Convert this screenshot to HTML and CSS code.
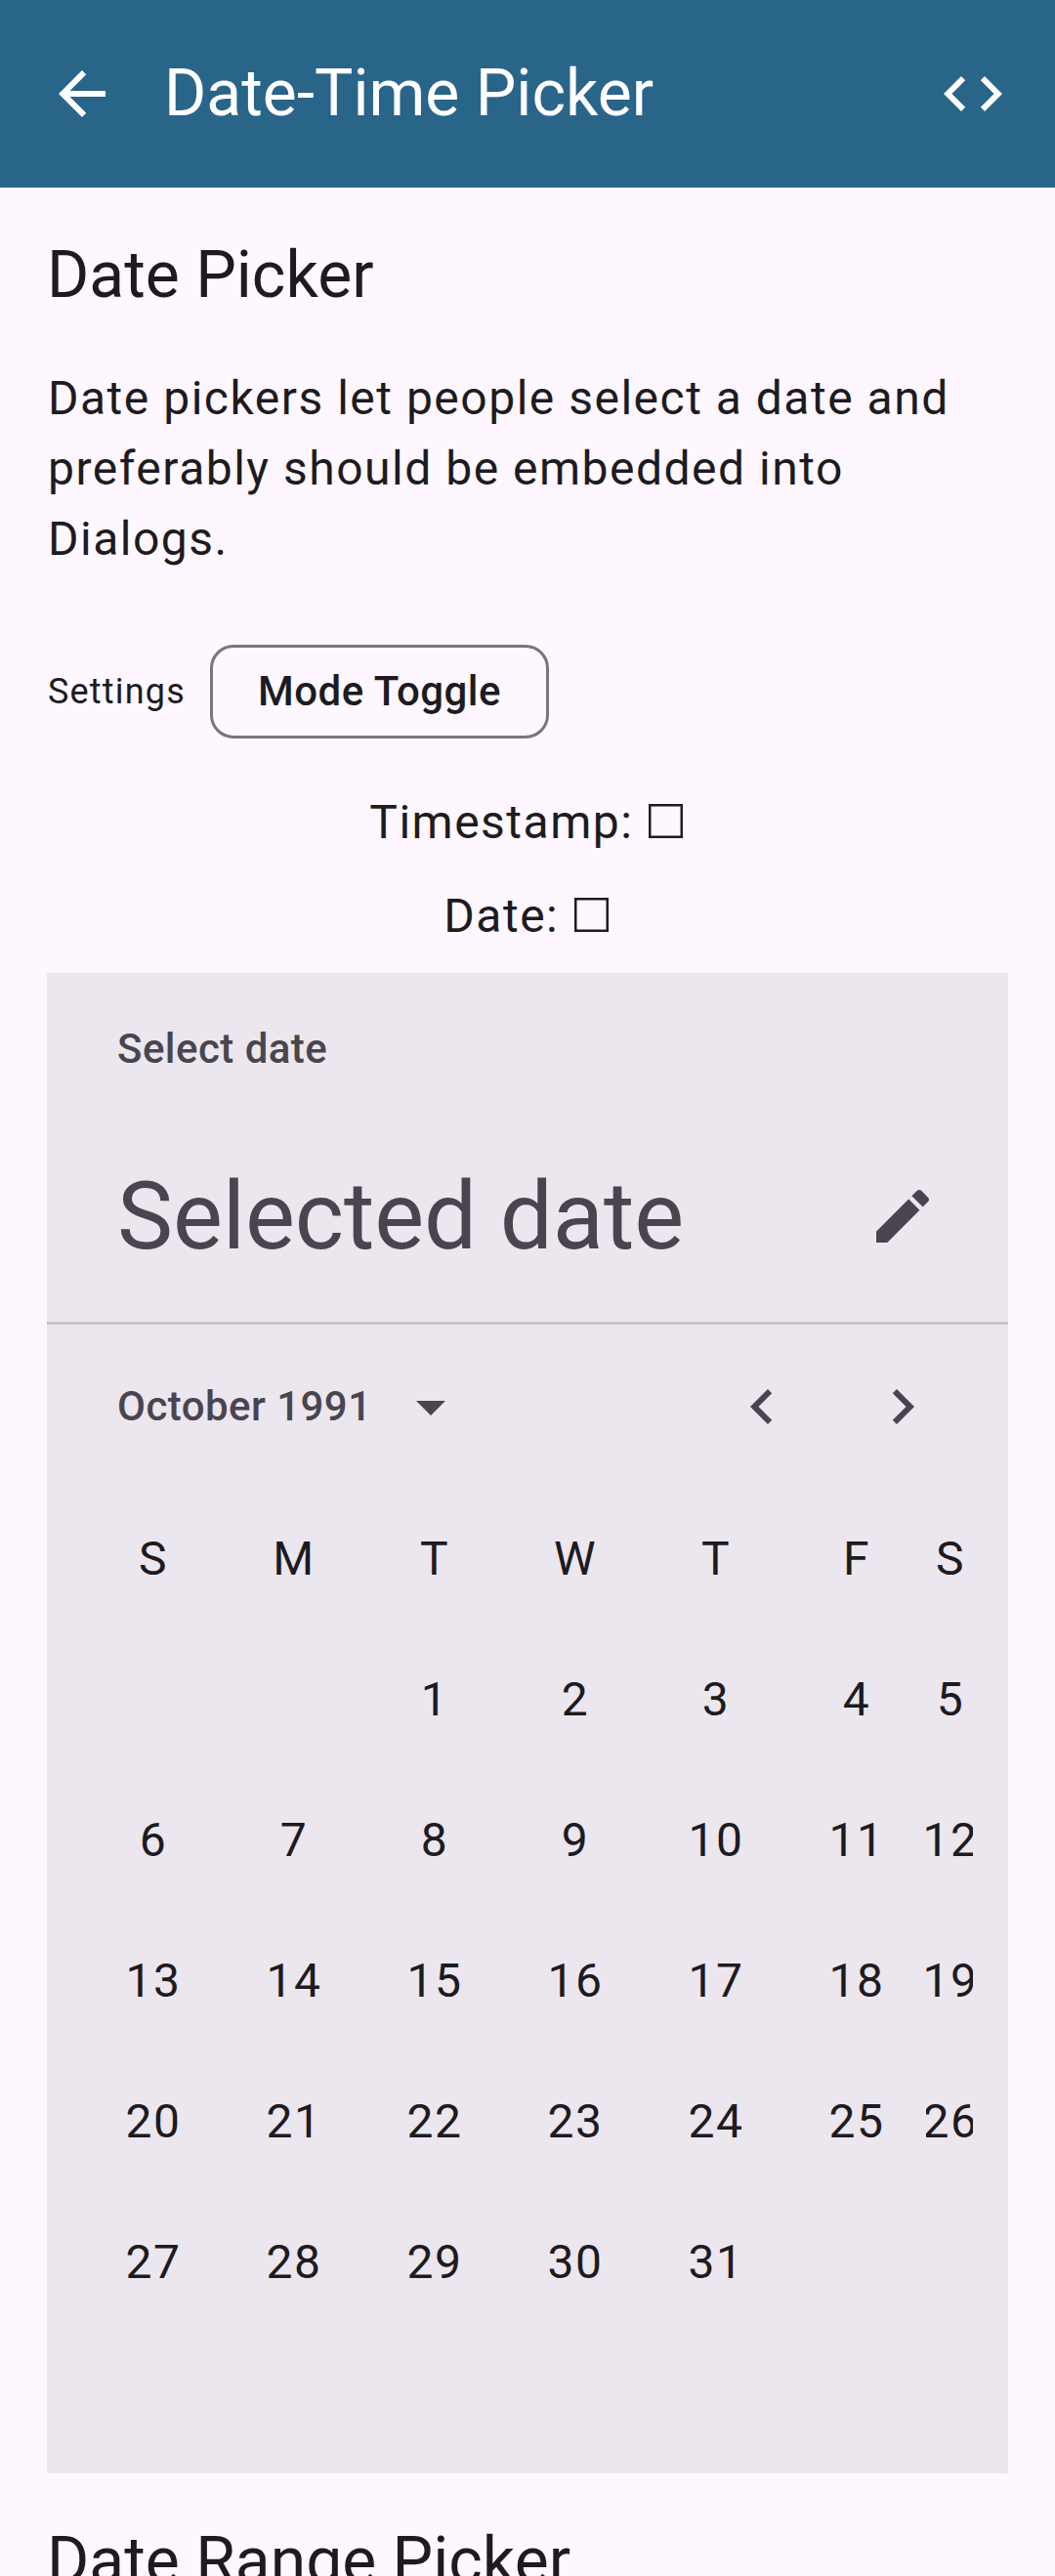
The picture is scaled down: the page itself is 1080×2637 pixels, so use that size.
FILE: index.html
```html
<!DOCTYPE html>
<html lang="en">
<head>
<meta charset="utf-8">
<title>Date-Time Picker</title>
<link rel="stylesheet" href="styles.css">
</head>
<body>
<header class="app-bar">
  <svg class="icon" viewBox="0 0 24 24"><path d="M20 11H7.83l5.59-5.59L12 4l-8 8 8 8 1.41-1.41L7.83 13H20v-2z"/></svg>
  <h1 class="app-title">Date-Time Picker</h1>
  <svg class="icon" viewBox="0 0 24 24"><path d="M9.4 16.6 4.8 12l4.6-4.6L8 6l-6 6 6 6 1.4-1.4zm5.2 0 4.6-4.6-4.6-4.6L16 6l6 6-6 6-1.4-1.4z"/></svg>
</header>
<main class="content">
  <h2 class="section-title">Date Picker</h2>
  <p class="description">Date pickers let people select a date and preferably should be embedded into Dialogs.</p>
  <div class="settings">
    <span class="settings-label">Settings</span>
    <button class="chip">Mode Toggle</button>
  </div>
  <div class="values">
    <p class="value">Timestamp: <svg class="empty-box" viewBox="0 0 35 35"><rect x="1.25" y="1.25" width="32.5" height="32.5"/></svg></p>
    <p class="value">Date: <svg class="empty-box" viewBox="0 0 35 35"><rect x="1.25" y="1.25" width="32.5" height="32.5"/></svg></p>
  </div>
  <section class="picker">
    <div class="picker-header">
      <div class="picker-label">Select date</div>
      <div class="headline-row">
        <div class="headline">Selected date</div>
        <svg class="icon" viewBox="0 0 24 24"><path d="M3 17.25V21h3.75L17.81 9.94l-3.75-3.75L3 17.25zM20.71 7.04c.39-.39.39-1.02 0-1.41l-2.34-2.34c-.39-.39-1.02-.39-1.41 0l-1.83 1.83 3.75 3.75 1.83-1.83z"/></svg>
      </div>
    </div>
    <div class="month-row">
      <div class="month">October 1991</div>
      <svg class="icon" viewBox="0 0 24 24"><path d="m7 10 5 5 5-5z"/></svg>
      <div class="month-nav">
        <svg class="icon" viewBox="0 0 24 24"><path d="M15.41 7.41 14 6l-6 6 6 6 1.41-1.41L10.83 12z"/></svg>
        <svg class="icon" viewBox="0 0 24 24"><path d="M10 6 8.59 7.41 13.17 12l-4.58 4.59L10 18l6-6z"/></svg>
      </div>
    </div>
    <div class="days">
      <span>S</span><span>M</span><span>T</span><span>W</span><span>T</span><span>F</span><span>S</span>
      <span></span><span></span><span>1</span><span>2</span><span>3</span><span>4</span><span>5</span>
      <span>6</span><span>7</span><span>8</span><span>9</span><span>10</span><span>11</span><span>12</span>
      <span>13</span><span>14</span><span>15</span><span>16</span><span>17</span><span>18</span><span>19</span>
      <span>20</span><span>21</span><span>22</span><span>23</span><span>24</span><span>25</span><span>26</span>
      <span>27</span><span>28</span><span>29</span><span>30</span><span>31</span><span></span><span></span>
    </div>
  </section>
  <h2 class="section-title">Date Range Picker</h2>
</main>
</body>
</html>
```
FILE: styles.css
```css
* { box-sizing: border-box; }
body {
  margin: 0;
  height: 2637px;
  overflow: hidden;
  background: #fef7ff;
  color: #1d1b20;
  font-family: Roboto, "Liberation Sans", sans-serif;
  font-size: 48px;
  line-height: 72px;
  letter-spacing: 1.5px;
}
h1, h2, p { margin: 0; font-weight: 400; }
.icon { width: 72px; height: 72px; flex: none; fill: currentColor; display: block; }

.app-bar {
  display: flex;
  align-items: center;
  gap: 48px;
  height: 192px;
  padding: 0 48px;
  background: #296589;
  color: #fff;
}
.app-title { flex: 1; font-size: 66px; line-height: 84px; letter-spacing: 0; }

.content { padding: 48px; }
.section-title { font-size: 66px; line-height: 84px; letter-spacing: 0; }
.description { margin-top: 48px; padding-left: 1px; }

.settings { display: flex; align-items: center; margin-top: 72px; }
.settings-label { width: 167px; padding-left: 1px; font-size: 36px; line-height: 48px; letter-spacing: 1.2px; }
.chip {
  width: 347px;
  height: 96px;
  padding: 0;
  border: 3px solid #79747e;
  border-radius: 24px;
  background: none;
  color: inherit;
  font: 500 42px/60px Roboto, "Liberation Sans", sans-serif;
  letter-spacing: 0.5px;
  text-align: center;
}

.values { display: flex; flex-direction: column; gap: 24px; margin: 50px 0 22px; text-align: center; }
.empty-box {
  width: 35px;
  height: 35px;
  margin: 0 3px 0 2px;
  fill: none;
  stroke: currentColor;
  stroke-width: 2.5;
}
.value { height: 72px; }

.picker { margin-bottom: 48px; background: #ece6ee; }
.picker-header {
  height: 360px;
  padding: 48px 72px 0;
  border-bottom: 3px solid #c9c4cc;
  color: #49454f;
}
.picker-label, .month { font-size: 42px; line-height: 60px; font-weight: 500; letter-spacing: 0.45px; }
.headline-row { display: flex; align-items: center; justify-content: space-between; margin-top: 81px; }
.headline { font-size: 96px; line-height: 120px; letter-spacing: -0.1px; }

.month-row { display: flex; align-items: center; height: 168px; padding: 0 72px; color: #49454f; }
.month { width: 285px; white-space: nowrap; }
.month-nav { display: flex; gap: 72px; margin-left: auto; }

.days {
  display: grid;
  grid-template-columns: repeat(6, 144px) 48px;
  grid-template-rows: repeat(7, 144px);
  padding: 0 36px;
}
.days span {
  display: flex;
  align-items: center;
  justify-content: center;
  padding-left: 2px;
  overflow: hidden;
}
```
